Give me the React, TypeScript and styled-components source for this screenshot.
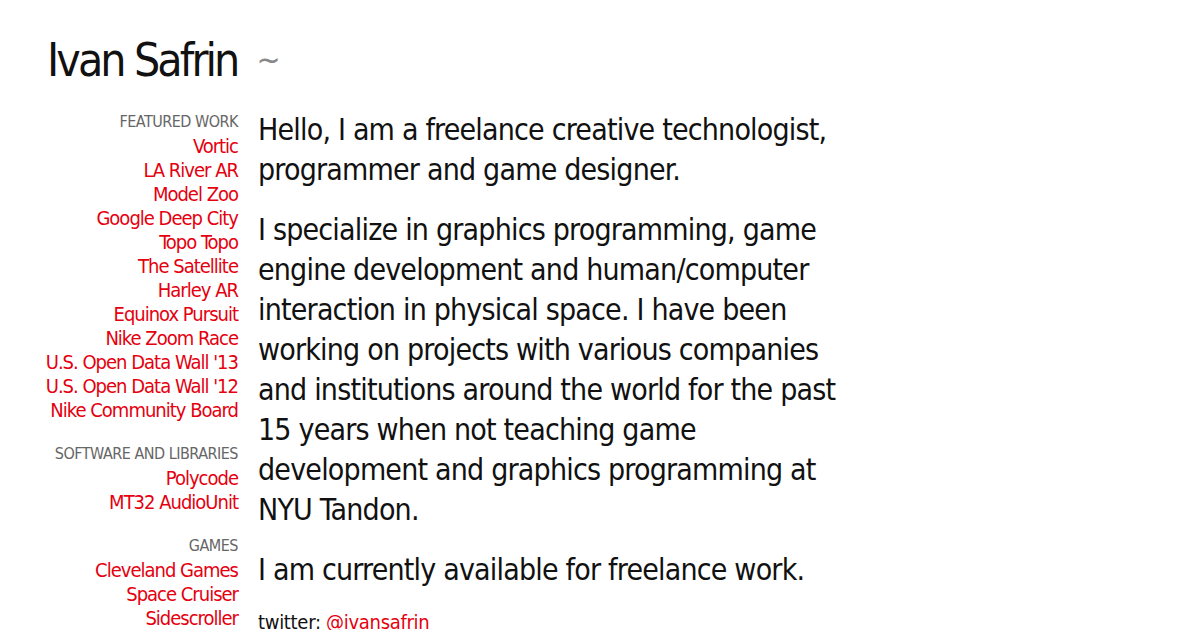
import React from "react";
import styled, { createGlobalStyle } from "styled-components";

const Global = createGlobalStyle`
  html, body { margin: 0; padding: 0; background: #fff; }
  body {
    font-family: "DejaVu Sans Condensed", "DejaVu Sans", sans-serif;
    font-stretch: condensed;
    color: #111;
  }
  a { text-decoration: none; color: #e5000f; }
`;

const Page = styled.div`
  padding: 34px 0 0 47px;
`;

const Header = styled.header`
  display: flex;
  align-items: baseline;
  gap: 19px;
  height: 67px;
`;

const Title = styled.h1`
  margin: 0;
  font-weight: normal;
  font-size: 46px;
  line-height: 52px;
  letter-spacing: -2.9px;
  color: #111;
`;

const Tilde = styled.span`
  color: #888;
  font-size: 32px;
  transform: translateY(-5px);
`;

const Body = styled.div`
  display: grid;
  grid-template-columns: 191px 600px;
  column-gap: 20px;
`;

const Nav = styled.nav`
  display: flex;
  flex-direction: column;
  align-items: flex-end;
  padding-top: 9px;
`;

const Section = styled.div`
  display: flex;
  flex-direction: column;
  align-items: flex-end;
  margin-bottom: 20px;
`;

const SectionTitle = styled.div`
  font-size: 16px;
  line-height: 24px;
  letter-spacing: -0.5px;
  color: #666;
  text-transform: uppercase;
  white-space: nowrap;
`;

const NavLink = styled.a`
  font-size: 20px;
  line-height: 24px;
  letter-spacing: -1px;
  white-space: nowrap;
`;

const Main = styled.main`
  padding-top: 9px;
`;

const Para = styled.p`
  margin: 0 0 20px;
  font-size: 30px;
  line-height: 40px;
  letter-spacing: -0.8px;
  color: #111;
`;

const Small = styled.p`
  margin: 20px 0 0;
  font-size: 20px;
  line-height: 24px;
  letter-spacing: -0.3px;
  color: #111;
`;

const sections: { title: string; items: string[] }[] = [
  {
    title: "Featured Work",
    items: [
      "Vortic",
      "LA River AR",
      "Model Zoo",
      "Google Deep City",
      "Topo Topo",
      "The Satellite",
      "Harley AR",
      "Equinox Pursuit",
      "Nike Zoom Race",
      "U.S. Open Data Wall '13",
      "U.S. Open Data Wall '12",
      "Nike Community Board",
    ],
  },
  { title: "Software and Libraries", items: ["Polycode", "MT32 AudioUnit"] },
  { title: "Games", items: ["Cleveland Games", "Space Cruiser", "Sidescroller"] },
];

export default function App() {
  return (
    <Page>
      <Global />
      <Header>
        <Title>Ivan Safrin</Title>
        <Tilde>~</Tilde>
      </Header>
      <Body>
        <Nav>
          {sections.map((s) => (
            <Section key={s.title}>
              <SectionTitle>{s.title}</SectionTitle>
              {s.items.map((i) => (
                <NavLink key={i} href="#">
                  {i}
                </NavLink>
              ))}
            </Section>
          ))}
        </Nav>
        <Main>
          <Para>
            Hello, I am a freelance creative technologist, programmer and game designer.
          </Para>
          <Para>
            I specialize in graphics programming, game engine development and human/computer
            interaction in physical space. I have been working on projects with various
            companies and institutions around the world for the past 15 years when not teaching
            game development and graphics programming at NYU Tandon.
          </Para>
          <Para>I am currently available for freelance work.</Para>
          <Small>
            twitter: <a href="#">@ivansafrin</a>
          </Small>
        </Main>
      </Body>
    </Page>
  );
}
